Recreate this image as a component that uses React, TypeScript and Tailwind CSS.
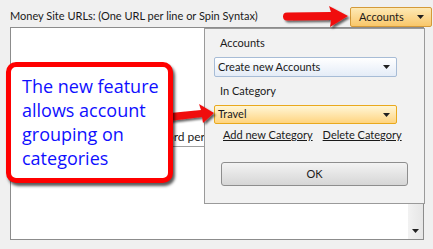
import React from "react";

const ui = { fontFamily: 'Lato, "Liberation Sans", Arial, sans-serif' };
const callFont = { fontFamily: '"Open Sans", "Noto Sans", sans-serif' };

function Caret() {
  return (
    <svg width="7" height="4" viewBox="0 0 7 4" className="shrink-0">
      <path d="M0 0 L7 0 L3.5 4 Z" fill="#202020" />
    </svg>
  );
}

function Arrows() {
  return (
    <svg
      className="absolute inset-0 pointer-events-none"
      width="433"
      height="249"
      viewBox="0 0 433 249"
    >
      <defs>
        <filter id="sh" x="-20%" y="-40%" width="150%" height="200%">
          <feDropShadow dx="2" dy="2" stdDeviation="1.2" floodColor="#000" floodOpacity="0.6" />
        </filter>
      </defs>
      <path
        d="M287 12.5 L331 12 L329 6 L348 16 L330 27 L331 20 L287 20.5 A4 4 0 0 1 287 12.5 Z"
        fill="#f01010"
        filter="url(#sh)"
      />
      <path
        d="M160 114 L201 110 L199 104 L214 113 L203 123 L202 117 L161 122 Z"
        fill="#f01010"
        filter="url(#sh)"
      />
    </svg>
  );
}

export default function App() {
  return (
    <div
      className="relative w-[433px] h-[249px] overflow-hidden bg-[#f0f0f0] text-[11px] text-[#1a1a1a]"
      style={ui}
    >
      <div className="flex h-[27px] items-start pt-[7px] pl-[10px] pr-[1px]">
        <span className="leading-[18px] flex-1">
          Money Site URLs: (One URL per line or Spin Syntax)
        </span>
        <button className="flex h-[20px] w-[82px] items-center justify-between rounded-[2px] border border-[#d49a3a] bg-gradient-to-b from-[#fde9b4] to-[#f9c769] pl-[8px] pr-[7px]">
          <span>Accounts</span>
          <Caret />
        </button>
      </div>

      <div className="ml-[10px] flex h-[213px] w-[414px] border border-[#8c8c8c] bg-white">
        <div className="flex-1">
          <div className="mt-[99px] flex h-[20px] w-[194px] items-center justify-end border-b border-[#a0a0a0] text-[12px]">
            <span>ord per</span>
          </div>
        </div>
        <div className="flex w-[15px] flex-col items-center justify-end bg-gradient-to-r from-[#f2f2f2] to-[#e6e6e6] pb-[6px]">
          <Caret />
        </div>
      </div>

      <div className="absolute left-[204px] top-[28px] flex h-[176px] w-[221px] flex-col border border-[#9a9a9a] bg-[#f2f2f2] pl-[9px]">
        <span className="mt-[6px] pl-[6px] leading-[16px]">Accounts</span>
        <div className="mt-[6px] flex h-[20px] w-[183px] items-center justify-between rounded-[2px] border border-[#a7bcd6] bg-gradient-to-b from-[#ffffff] to-[#e4ecf7] pl-[3px] pr-[6px]">
          <span>Create new Accounts</span>
          <Caret />
        </div>
        <span className="mt-[6px] pl-[6px] leading-[16px]">In Category</span>
        <div className="mt-[6px] flex h-[19px] w-[183px] items-center justify-between rounded-[2px] border border-[#e9a91e] bg-gradient-to-b from-[#fff6d6] to-[#ffd47e] pl-[3px] pr-[6px]">
          <span>Travel</span>
          <Caret />
        </div>
        <div className="mt-[3px] flex gap-[10px] pl-[9px] leading-[16px]">
          <span className="underline">Add new Category</span>
          <span className="underline">Delete Category</span>
        </div>
        <button className="ml-[7px] mt-[19px] h-[24px] w-[187px] rounded-[3px] border border-[#8e8e8e] bg-gradient-to-b from-[#f3f3f3] to-[#d6d6d6]">
          OK
        </button>
      </div>

      <Arrows />

      <div
        className="absolute left-[6px] top-[62px] h-[121px] w-[167px] rounded-[10px] border-[5px] border-[#ff0000] bg-white pl-[11px] pt-[7px] text-[18px] leading-[24px] text-[#0f0fff] shadow-[2px_3px_3px_rgba(0,0,0,0.65)]"
        style={callFont}
      >
        The new feature
        <br />
        allows account
        <br />
        grouping on
        <br />
        categories
      </div>
    </div>
  );
}
